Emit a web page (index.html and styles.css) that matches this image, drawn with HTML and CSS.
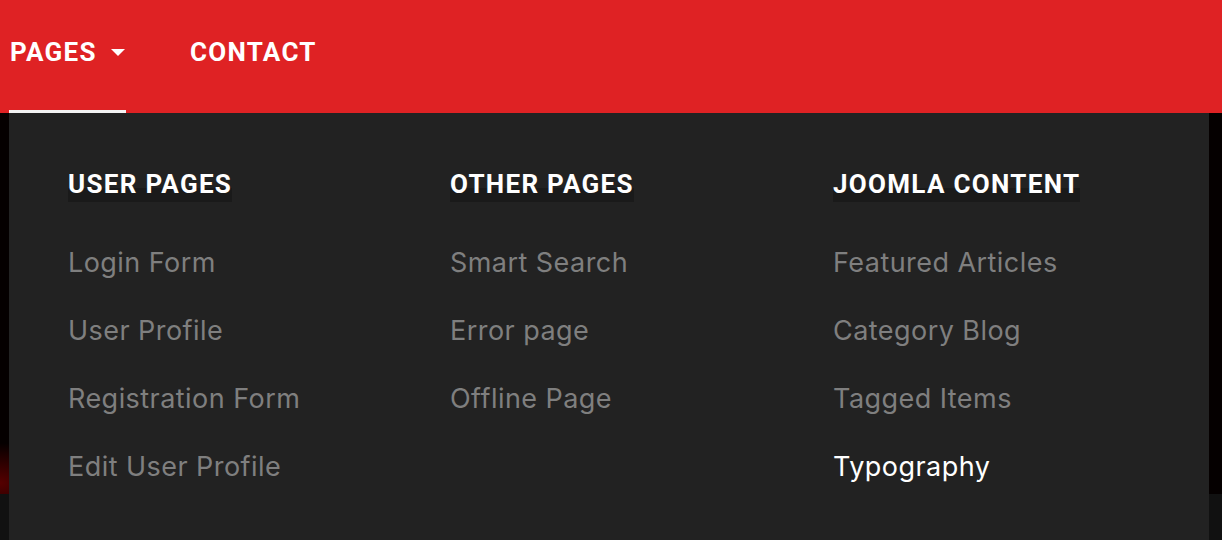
FILE: index.html
```html
<!DOCTYPE html>
<html>
<head>
<meta charset="utf-8">
<link rel="stylesheet" href="styles.css">
</head>
<body>
<div class="page">
  <header class="topbar">
    <nav class="menu">
      <div class="menu-item active">
        <span class="menu-label">PAGES</span>
        <svg class="caret" width="16" height="8" viewBox="0 0 16 8"><path d="M1 0 L15 0 L8 7 Z" fill="#fff"/></svg>
        <div class="dropdown">
          <div class="col">
            <h3 class="col-title">USER PAGES</h3>
            <ul class="links">
              <li>Login Form</li>
              <li>User Profile</li>
              <li>Registration Form</li>
              <li>Edit User Profile</li>
            </ul>
          </div>
          <div class="col">
            <h3 class="col-title">OTHER PAGES</h3>
            <ul class="links">
              <li>Smart Search</li>
              <li>Error page</li>
              <li>Offline Page</li>
            </ul>
          </div>
          <div class="col">
            <h3 class="col-title">JOOMLA CONTENT</h3>
            <ul class="links">
              <li>Featured Articles</li>
              <li>Category Blog</li>
              <li>Tagged Items</li>
              <li class="current">Typography</li>
            </ul>
          </div>
        </div>
      </div>
      <div class="menu-item">
        <span class="menu-label">CONTACT</span>
      </div>
    </nav>
  </header>
  <div class="hero"></div>
  <div class="footer"></div>
</div>
</body>
</html>
```

FILE: styles.css
```css
* { box-sizing: border-box; }
html, body { margin: 0; padding: 0; }
body {
  width: 1222px;
  height: 540px;
  overflow: hidden;
  background: #000;
  font-family: "Roboto", "Liberation Sans", sans-serif;
}
.page { display: flex; flex-direction: column; height: 540px; }
.topbar {
  height: 113px;
  background: #df2224;
  padding-left: 9px;
  flex: none;
}
.menu { display: flex; height: 100%; gap: 63px; }
.menu-item {
  position: relative;
  display: flex;
  align-items: center;
  height: 100%;
  padding-bottom: 10px;
  color: #fff;
}
.menu-item.active { border-bottom: 3px solid #f4f4f4; padding-bottom: 7px; width: 117px; }
.menu-label {
  font-weight: 700;
  font-size: 26px;
  letter-spacing: 1.3px;
  padding-left: 1px;
}
.caret { margin-left: 13px; margin-top: 2px; }
.hero {
  height: 381px;
  background: radial-gradient(ellipse 60px 40px at 0px 370px, rgba(120,0,0,0.7), rgba(0,0,0,0) 100%), #050000;
  flex: none;
}
.footer { flex: 1; background: #111; }
.dropdown {
  position: absolute;
  top: 113px;
  left: 0;
  width: 1200px;
  height: 427px;
  background: #222;
  display: grid;
  grid-template-columns: 382px 383px 383px;
  padding: 53px 0 0 59px;
  z-index: 5;
}
.col-title {
  margin: 0;
  display: inline-block;
  font-size: 26px;
  font-weight: 700;
  letter-spacing: 1.3px;
  color: #fff;
  line-height: 36px;
  background: linear-gradient(to bottom, transparent 62%, #1a1a1a 62%);
}
.links { list-style: none; margin: 44px 0 0; padding: 0; }
.links li {
  font-family: "Inter", "Roboto", sans-serif;
  font-size: 27px;
  letter-spacing: 0.45px;
  color: #7f7f7f;
  line-height: 34px;
  margin-bottom: 34px;
}
.links li.current { color: #fff; }
```
